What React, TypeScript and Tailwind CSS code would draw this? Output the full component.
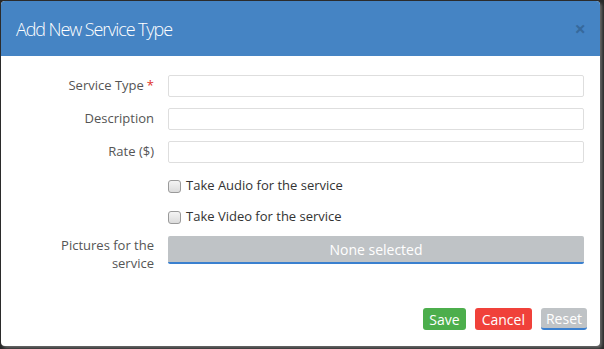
import React from "react";

const font = { fontFamily: '"Open Sans", "Noto Sans", sans-serif' };

function Row({ label, required }: { label: string; required?: boolean }) {
  return (
    <div className="flex items-center h-[22px]">
      <div className="w-[153px] shrink-0 text-right text-[13px] text-[#555]">
        {label}
        {required && <span className="text-[#e0322b] ml-[3px]">*</span>}
      </div>
      <div className="ml-[14px] w-[416px] h-[22px] border border-[#dedede] rounded-[2px] bg-white" />
    </div>
  );
}

function Check({ label }: { label: string }) {
  return (
    <div className="flex items-center ml-[167px] h-[14px]">
      <div className="w-[13px] h-[13px] rounded-[3px] border border-[#9a9a9a] bg-gradient-to-b from-[#f4f4f4] to-[#dcdcdc]" />
      <span className="ml-[5px] text-[13px] text-[#333]">{label}</span>
    </div>
  );
}

export default function App() {
  return (
    <div
      className="w-[604px] h-[349px] bg-[#2a2a2a] pt-px pl-px overflow-hidden"
      style={font}
    >
      <div className="w-[599px] h-[345px] bg-white rounded-[4px] overflow-hidden flex flex-col shadow-[2px_2px_3px_rgba(120,120,120,0.8)]">
        <div className="h-[55px] bg-[#4584c4] flex items-center justify-between pl-[15px] pr-[14px]">
          <span className="text-white text-[18px] tracking-[-1.1px] font-light leading-none mt-[1px]">Add New Service Type</span>
          <span className="text-black opacity-20 text-[20px] font-bold leading-none">×</span>
        </div>
        <div className="flex flex-col pt-[19px]">
          <div className="flex flex-col gap-[11px]">
            <Row label="Service Type" required />
            <Row label="Description" />
            <Row label="Rate ($)" />
          </div>
          <div className="mt-[16px] flex flex-col gap-[17px]">
            <Check label="Take Audio for the service" />
            <Check label="Take Video for the service" />
          </div>
          <div className="flex mt-[12px]">
            <div className="w-[153px] shrink-0 text-right text-[13px] leading-[18px] text-[#555] pt-0">
              Pictures for the
              <br />
              service
            </div>
            <div className="ml-[14px] w-[416px] h-[28px] bg-[#bfc3c6] rounded-[2px] border-b-2 border-[#3a80cf] flex items-center justify-center text-white text-[14px]">
              None selected
            </div>
          </div>
          <div className="flex justify-end gap-[9px] mt-[36px] pr-[13px]">
            <div className="h-[22px] px-[6px] rounded-[3px] bg-[#4cae4c] text-white text-[14px] flex items-center">Save</div>
            <div className="h-[22px] px-[7px] rounded-[3px] bg-[#f0413a] text-white text-[14px] flex items-center">Cancel</div>
            <div className="h-[22px] px-[5px] rounded-[3px] bg-[#bfc3c6] border-b-2 border-[#3a80cf] text-white text-[14px] flex items-center">Reset</div>
          </div>
        </div>
      </div>
    </div>
  );
}
